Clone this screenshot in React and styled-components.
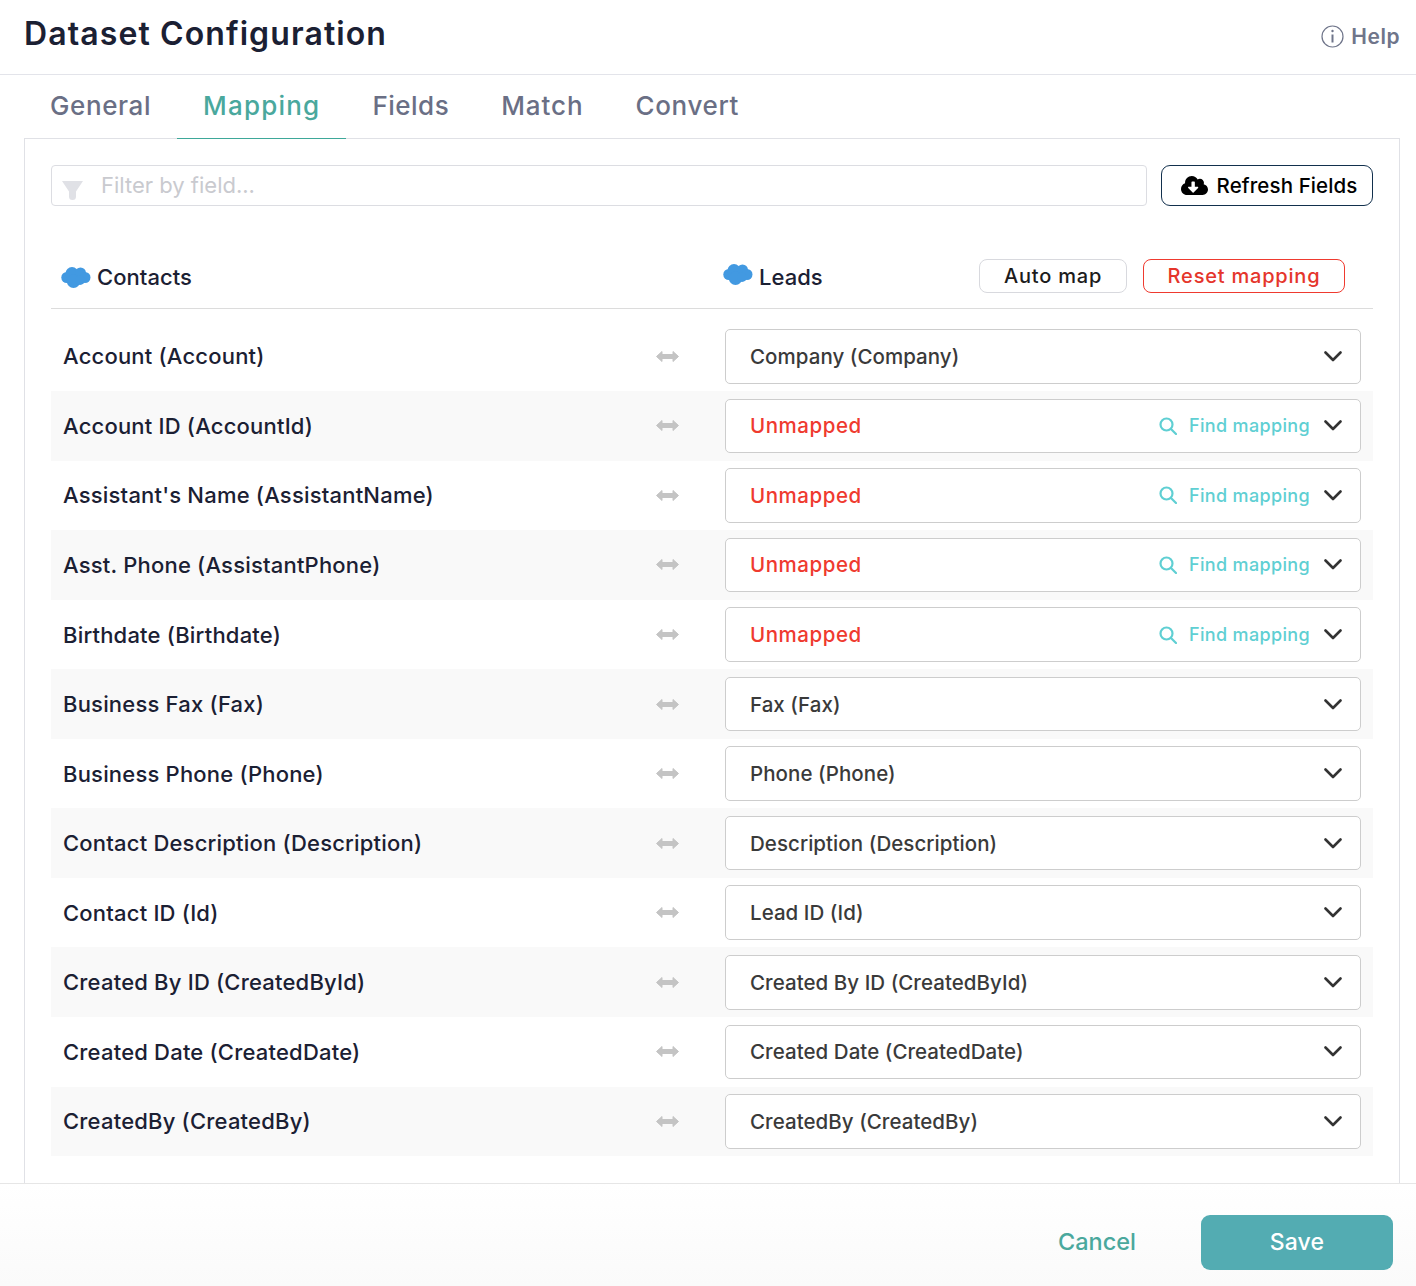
import React from 'react';
import styled, { createGlobalStyle } from 'styled-components';
import { FaCloudDownloadAlt } from 'react-icons/fa';

const Global = createGlobalStyle`
  html, body { margin: 0; padding: 0; background: #fff; }
  body { font-family: Inter, "Noto Sans", sans-serif; }
  * { box-sizing: border-box; }
`;

const Page = styled.div`width: 1416px; height: 1286px; display: flex; flex-direction: column; overflow: hidden;`;
const Header = styled.header`height: 75px; flex: none; display: flex; align-items: flex-start; justify-content: space-between; padding: 0 16px 0 24px; border-bottom: 1px solid #e3e4ea;`;
const Title = styled.h1`margin: 14px 0 0; font-size: 32px; line-height: 40px; font-weight: 600; color: #1b2033; letter-spacing: 1.1px;`;
const Help = styled.div`margin-top: 24px; display: flex; align-items: center; gap: 7px; font-size: 21px; line-height: 25px; font-weight: 600; color: #6f758a; letter-spacing: .5px;`;
const Tabs = styled.nav`height: 64px; flex: none; display: flex; padding: 0 24px; position: relative; z-index: 1;`;
const Tab = styled.div`
  padding: 14px 26px 0; height: 64px; font-size: 26px; line-height: 34px; font-weight: 500;
  letter-spacing: ${p => p.$ls}px;
  color: ${p => (p.$active ? '#4aa89d' : '#6a6f85')};
  border-bottom: 1px solid ${p => (p.$active ? '#3ea899' : 'transparent')};
`;
const Panel = styled.section`height: 1045px; flex: none; margin: -1px 16px 0 24px; padding: 26px 26px 0; border: 1px solid #e0e1e6; border-bottom: 0;`;
const FilterBar = styled.div`display: flex; gap: 14px; height: 41px;`;
const FilterField = styled.div`flex: 1; display: flex; align-items: center; padding-left: 10px; gap: 18px; border: 1px solid #dcdde2; border-radius: 4px;`;
const FilterText = styled.span`font-size: 22px; color: #c9cacf; letter-spacing: 0; line-height: 30px; margin-top: -1px;`;
const RefreshButton = styled.button`width: 212px; display: flex; align-items: center; justify-content: center; gap: 9px; background: #fff; border: 1px solid #12304d; border-radius: 9px; font: 500 20.5px Inter, sans-serif; letter-spacing: .1px; color: #000; padding: 0 0 0 4px;`;
const ColumnsHead = styled.div`height: 103px; display: flex; border-bottom: 1px solid #dcdcdc; padding-top: 53px;`;
const SourceHead = styled.div`width: 674px; flex: none; display: flex; align-items: center; height: 36px; padding-left: 10px; gap: 6px;`;
const HeadLabel = styled.span`font-size: 22px; line-height: 28px; font-weight: 500; color: #1b2033; letter-spacing: .05px;`;
const TargetHead = styled.div`flex: 1; display: flex; align-items: center; height: 36px; padding-right: 28px; gap: 16px;`;
const TargetName = styled.div`display: flex; align-items: center; gap: 6px; margin-right: auto; margin-left: -2px;`;
const CloudSvg = styled.svg`width: 30px; height: 21px; flex: none; fill: #4299e1; margin-top: ${p => (p.$up ? '-5px' : '0')};`;
const OutlineBtn = styled.button`
  height: 34px; width: ${p => p.$w}px; background: #fff; border-radius: 8px; padding: 0;
  border: 1px solid ${p => (p.$danger ? '#ef3a2f' : '#d8d9de')}; color: ${p => (p.$danger ? '#e5352b' : '#1c1c1c')};
  font: 500 20px Inter, sans-serif; letter-spacing: .8px; margin-top: -2px;
`;
const Rows = styled.div`padding-top: 12.57px;`;
const Row = styled.div`height: 69.56px; display: flex; align-items: center; padding: 0 12px; background: ${p => (p.$shade ? '#f9f9f9' : '#fff')};`;
const FieldName = styled.div`width: 593px; flex: none; font-size: 22px; font-weight: 500; color: #1b2033; letter-spacing: .2px; line-height: 28px;`;
const ArrowSvg = styled.svg`width: 23px; height: 11px; fill: #c4c4c4; stroke: #c4c4c4; flex: none; margin-right: 46px;`;
const Select = styled.div`flex: 1; height: 54.5px; display: flex; align-items: center; background: #fff; border: 1px solid #cdcdcd; border-radius: 5px; padding: 0 18px 0 24px;`;
const SelectValue = styled.span`margin-right: auto; font-size: 20.5px; font-weight: 500; letter-spacing: ${p => (p.$unmapped ? '.55px' : '.05px')}; color: ${p => (p.$unmapped ? '#ef3a2f' : '#3a3a3a')};`;
const FindText = styled.span`font-size: 18px; font-weight: 500; color: #5fcfd3; margin: 0 14px 0 12px; letter-spacing: .35px;`;
const Footer = styled.footer`flex: 1; display: flex; align-items: flex-start; justify-content: flex-end; padding: 31px 23px 0 0; border-top: 1px solid #e6e6e6; background: linear-gradient(#fff, #fafafa);`;
const CancelBtn = styled.button`background: none; border: 0; padding: 0; height: 53px; font: 500 23.5px Inter, sans-serif; letter-spacing: 0; color: #4aa89d; margin-right: 65px;`;
const SaveBtn = styled.button`width: 192px; height: 55px; border: 0; border-radius: 9px; padding: 0 0 2px; background: #53acb2; color: #fff; font: 500 23px Inter, sans-serif; letter-spacing: .1px;`;

const FunnelIcon = () => (
  <svg width="21" height="19" viewBox="0 0 21 19" style={{ marginTop: 10, flex: 'none' }}>
    <path d="M0 0h21l-7 10.500V15.500a3.500 3.500 0 0 1-7 0V10.500z" fill="#e0e1e6" />
  </svg>
);
const InfoIcon = () => (
  <svg width="23" height="23" viewBox="0 0 23 23" fill="none" stroke="#6f758a" strokeWidth="1.200">
    <circle cx="11.500" cy="11.500" r="10.500" />
    <path d="M11.500 9.500v8" strokeWidth="2" />
    <circle cx="11.500" cy="6" r="1.200" fill="#6f758a" stroke="none" />
  </svg>
);
const SearchIcon = () => (
  <svg width="18" height="18" viewBox="0 0 18 18" fill="none" stroke="#5fcfd3" strokeWidth="2.200" strokeLinecap="round">
    <circle cx="7.500" cy="7.500" r="6" /><path d="M12 12l5 5" />
  </svg>
);
const Chevron = () => (
  <svg width="18" height="11" viewBox="0 0 18 11" fill="none" stroke="#333" strokeWidth="2.600" strokeLinecap="round" strokeLinejoin="round">
    <path d="M1.500 1.500L9 9l7.500-7.500" />
  </svg>
);
const Cloud = ({ up }) => (
  <CloudSvg $up={up} viewBox="0 0 30 21">
    <circle cx="5.800" cy="10.500" r="5.500" />
    <circle cx="11" cy="6.500" r="6.500" />
    <circle cx="19.500" cy="6" r="5.500" />
    <circle cx="24" cy="10.500" r="5.500" />
    <circle cx="12.500" cy="14.300" r="6.700" />
    <circle cx="19" cy="13" r="5" />
  </CloudSvg>
);
const LinkArrow = () => (
  <ArrowSvg viewBox="0 0 23 11" strokeWidth="1" strokeLinejoin="round">
    <path d="M.500 5.500L6 .5v3h11v-3l5.500 5-5.500 5v-3H6v3z" />
  </ArrowSvg>
);

const tabs = [['General', .6], ['Mapping', 1.2], ['Fields', .5], ['Match', .9], ['Convert', .65]];
const rows = [
  ['Account (Account)', 'Company (Company)'],
  ['Account ID (AccountId)', null],
  ["Assistant's Name (AssistantName)", null],
  ['Asst. Phone (AssistantPhone)', null],
  ['Birthdate (Birthdate)', null],
  ['Business Fax (Fax)', 'Fax (Fax)'],
  ['Business Phone (Phone)', 'Phone (Phone)'],
  ['Contact Description (Description)', 'Description (Description)'],
  ['Contact ID (Id)', 'Lead ID (Id)'],
  ['Created By ID (CreatedById)', 'Created By ID (CreatedById)'],
  ['Created Date (CreatedDate)', 'Created Date (CreatedDate)'],
  ['CreatedBy (CreatedBy)', 'CreatedBy (CreatedBy)'],
];

export default function App() {
  return (
    <Page>
      <Global />
      <Header>
        <Title>Dataset Configuration</Title>
        <Help><InfoIcon />Help</Help>
      </Header>
      <Tabs>
        {tabs.map(([t, ls]) => <Tab key={t} $ls={ls} $active={t === 'Mapping'}>{t}</Tab>)}
      </Tabs>
      <Panel>
        <FilterBar>
          <FilterField><FunnelIcon /><FilterText>Filter by field...</FilterText></FilterField>
          <RefreshButton><FaCloudDownloadAlt size={27} />Refresh Fields</RefreshButton>
        </FilterBar>
        <ColumnsHead>
          <SourceHead><Cloud /><HeadLabel>Contacts</HeadLabel></SourceHead>
          <TargetHead>
            <TargetName><Cloud up /><HeadLabel>Leads</HeadLabel></TargetName>
            <OutlineBtn $w={148}>Auto map</OutlineBtn>
            <OutlineBtn $w={202} $danger>Reset mapping</OutlineBtn>
          </TargetHead>
        </ColumnsHead>
        <Rows>
          {rows.map(([src, dst], i) => (
            <Row key={src} $shade={i % 2 === 1}>
              <FieldName>{src}</FieldName>
              <LinkArrow />
              <Select>
                <SelectValue $unmapped={!dst}>{dst || 'Unmapped'}</SelectValue>
                {!dst && <><SearchIcon /><FindText>Find mapping</FindText></>}
                <Chevron />
              </Select>
            </Row>
          ))}
        </Rows>
      </Panel>
      <Footer>
        <CancelBtn>Cancel</CancelBtn>
        <SaveBtn>Save</SaveBtn>
      </Footer>
    </Page>
  );
}
